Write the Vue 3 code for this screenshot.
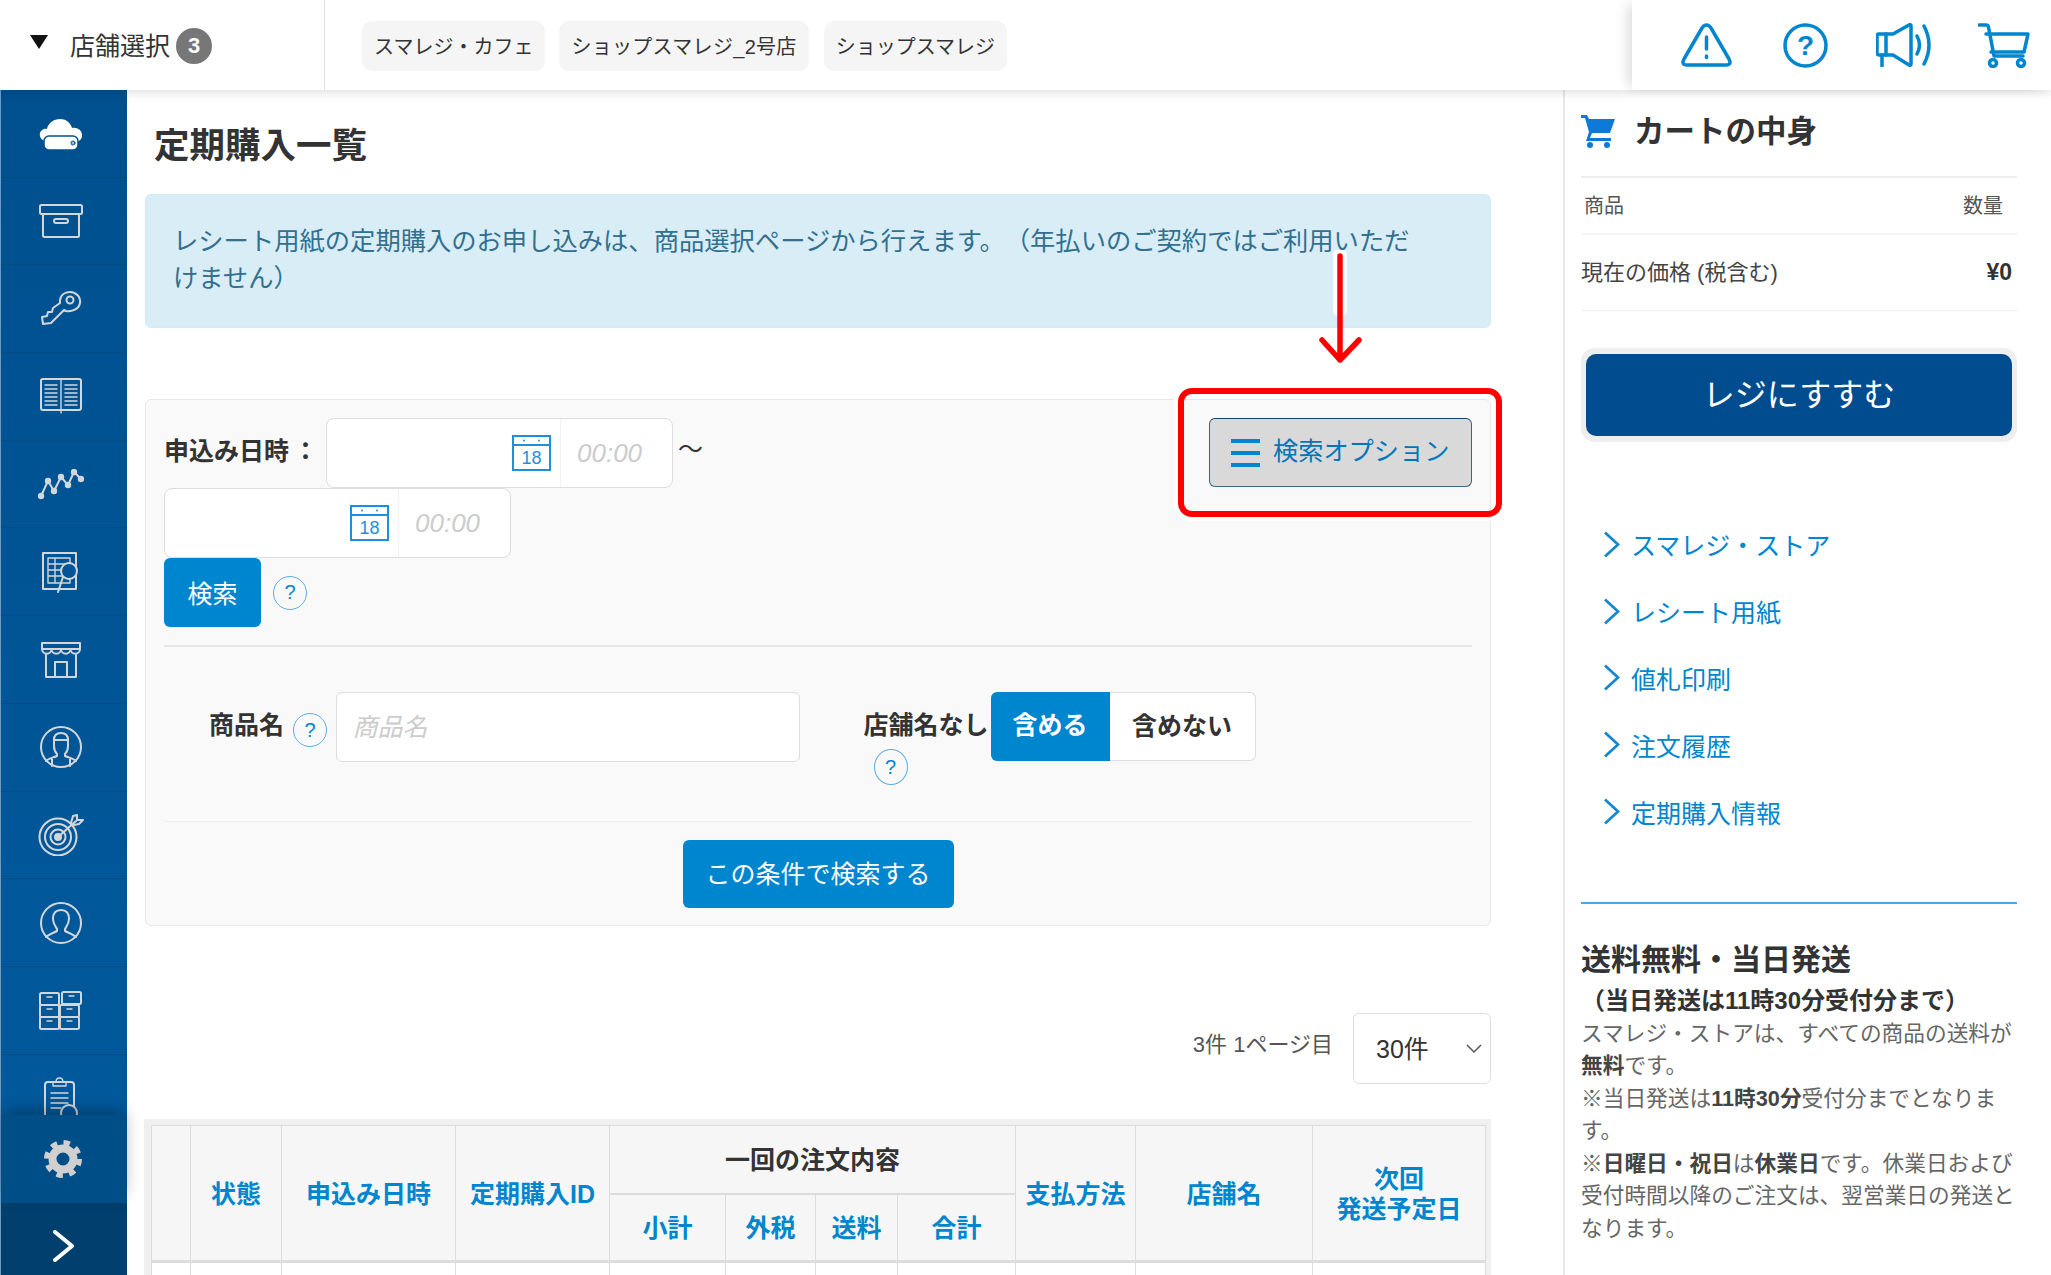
<script setup>
const tags = ['スマレジ・カフェ', 'ショップスマレジ_2号店', 'ショップスマレジ']
const links = ['スマレジ・ストア', 'レシート用紙', '値札印刷', '注文履歴', '定期購入情報']
</script>

<template>
  <div class="page">
    <header class="topbar">
      <div class="shop-select">
        <span class="caret"></span>
        <span>店舗選択</span>
        <span class="badge">3</span>
      </div>
      <div class="tags">
        <span v-for="tag in tags" :key="tag" class="tag">{{ tag }}</span>
      </div>
      <div class="top-icons">
        <svg width="51" height="44" viewBox="0 0 51 44" class="top-icon">
          <path d="M25.5 2Q28 2 30 5L48 36Q51 42 45 42H6Q0 42 3 36L21 5Q23 2 25.5 2Z" />
          <path d="M25.5 14V26M25.5 33V34.5" />
        </svg>
        <svg width="45" height="45" viewBox="0 0 45 45" class="top-icon">
          <circle cx="22.5" cy="22.5" r="20.5" />
          <text x="22.5" y="32" text-anchor="middle" class="help-mark">?</text>
        </svg>
        <svg width="57" height="44" viewBox="0 0 57 44" class="top-icon">
          <path d="M17 11L33 2Q35 1 35 3V41Q35 43 33 42L17 32H3Q1 32 1 30V13Q1 11 3 11Z" />
          <path d="M10 11V32M6 32V43M41 13Q46 22 41 31M48 3Q58 22 48 41" />
        </svg>
        <svg width="52" height="45" viewBox="0 0 52 45" class="top-icon">
          <path d="M1 2H8Q10 2 10.5 4L16 33H45M8 11H50L46 29H13" />
          <circle cx="15" cy="40" r="3.5" />
          <circle cx="43" cy="40" r="3.5" />
        </svg>
      </div>
    </header>

    <div class="body">
      <nav class="sidenav">
        <div class="nav-list">
          <a class="nav-item nav-cloud">
            <svg width="44" height="32" viewBox="0 0 44 32">
              <path class="solid" d="M8 22C2 22 0 17 1 14C2 11 5 9 8 10C9 4 15 0 21 0C28 0 32 5 33 9C38 8 43 11 43 16C43 20 41 22 38 22Z" />
              <rect x="5" y="17" width="34" height="14" rx="5" class="drive" />
              <circle cx="34" cy="24" r="2" class="drive-dot" />
            </svg>
          </a>
          <a class="nav-item">
            <svg width="44" height="34" viewBox="0 0 44 34">
              <rect x="1" y="1" width="42" height="9" rx="1.5" />
              <rect x="4" y="10" width="36" height="23" rx="1.5" />
              <rect x="15" y="15" width="14" height="4" rx="2" />
            </svg>
          </a>
          <a class="nav-item">
            <svg width="42" height="35" viewBox="0 0 42 35">
              <path d="M20 9C21 3 26 1 30 1C36 1 41 6 40 12C39 18 32 21 26 20L24 19L11 32L3 33L2 26L7 25L8 21L12 21L13 17L20 12Z" />
              <circle cx="30" cy="9" r="3.5" />
            </svg>
          </a>
          <a class="nav-item">
            <svg width="42" height="36" viewBox="0 0 42 36">
              <rect x="1" y="1" width="40" height="31" rx="2" />
              <path d="M21 1V35M5 7H17M5 11H17M5 15H17M5 19H17M5 23H17M5 27H17M25 7H37M25 11H37M25 15H37M25 19H37M25 23H37M25 27H37" class="thin" />
            </svg>
          </a>
          <a class="nav-item">
            <svg width="46" height="31" viewBox="0 0 46 31">
              <path d="M3 27L10 12L16 22L23 8L30 16L36 3L43 10" />
              <circle cx="3" cy="27" r="2.2" class="dot" />
              <circle cx="10" cy="12" r="2.2" class="dot" />
              <circle cx="16" cy="22" r="2.2" class="dot" />
              <circle cx="23" cy="8" r="2.2" class="dot" />
              <circle cx="30" cy="16" r="2.2" class="dot" />
              <circle cx="36" cy="3" r="2.2" class="dot" />
              <circle cx="43" cy="10" r="2.2" class="dot" />
            </svg>
          </a>
          <a class="nav-item nav-report">
            <svg width="37" height="41" viewBox="0 0 37 41">
              <rect x="1" y="1" width="33" height="36" />
              <path d="M6 6H28V31H6ZM6 12H28M6 18H28M6 24H28M13 6V31" class="thin" />
              <circle cx="27" cy="19" r="8" class="filled" />
              <path d="M21 25L16 40" />
            </svg>
          </a>
          <a class="nav-item">
            <svg width="40" height="37" viewBox="0 0 40 37">
              <path d="M1 2H39V8A4.6 4.6 0 0 1 29.5 8A4.7 4.7 0 0 1 20 8A4.7 4.7 0 0 1 10.5 8A4.7 4.7 0 0 1 1 8ZM1 8H39" />
              <path d="M5 14V36H35V14M14 36V21H26V36" />
            </svg>
          </a>
          <a class="nav-item">
            <svg width="42" height="42" viewBox="0 0 42 42">
              <circle cx="21" cy="21" r="20" />
              <path d="M14 14Q14 7 21 7Q28 7 28 14M14 14H28M14 14V20C14 25 17 28 17 28V30C12 32 8 33 6 35M28 14V20C28 25 25 28 25 28V30C30 32 34 33 36 35M12 33V40M30 33V40" />
            </svg>
          </a>
          <a class="nav-item">
            <svg width="46" height="42" viewBox="0 0 46 42">
              <circle cx="20" cy="23" r="18.5" />
              <circle cx="20" cy="23" r="13" />
              <circle cx="20" cy="23" r="7.5" />
              <circle cx="20" cy="23" r="3" class="dot" />
              <path d="M20 23L38 7M33 9L35 2L39 1L39 6L45 6L41 10L36 11" />
            </svg>
          </a>
          <a class="nav-item">
            <svg width="42" height="42" viewBox="0 0 42 42">
              <circle cx="21" cy="21" r="20" />
              <path d="M21 8C15 8 13 12 13 17C13 22 16 25 17 27V29C13 31 8 33 6 35M21 8C27 8 29 12 29 17C29 22 26 25 25 27V29C29 31 34 33 36 35" />
            </svg>
          </a>
          <a class="nav-item">
            <svg width="43" height="39" viewBox="0 0 43 39">
              <rect x="1" y="2" width="19" height="12" rx="1.5" />
              <rect x="23" y="1" width="19" height="12" rx="1.5" />
              <rect x="1" y="14" width="19" height="12" rx="1.5" />
              <rect x="21" y="14" width="19" height="12" rx="1.5" />
              <rect x="1" y="26" width="19" height="12" rx="1.5" />
              <rect x="21" y="26" width="19" height="12" rx="1.5" />
              <path d="M8 6H13M30 5H35M8 18H13M28 18H33M8 30H13M28 30H33" class="thin" />
            </svg>
          </a>
          <a class="nav-item">
            <svg width="34" height="46" viewBox="0 0 34 46">
              <rect x="1" y="5" width="29" height="40" rx="3" />
              <path d="M9 9V5H12Q12 1 15.5 1Q19 1 19 5H22V9ZM7 16H24M7 21H24M7 26H24M7 31H17" class="thin" />
              <circle cx="25" cy="36" r="8" class="filled" />
            </svg>
          </a>
        </div>
        <a class="nav-gear">
          <svg width="38" height="38" viewBox="0 0 38 38">
            <circle cx="19" cy="19" r="10.5" class="gear-ring" />
            <circle cx="19" cy="19" r="16" class="gear-teeth" />
          </svg>
        </a>
        <a class="nav-toggle">
          <svg width="22" height="32" viewBox="0 0 22 32">
            <path d="M3 2L20 16L3 30" />
          </svg>
        </a>
      </nav>

      <main class="main">
        <h1 class="page-title">定期購入一覧</h1>
        <div class="notice">レシート用紙の定期購入のお申し込みは、商品選択ページから行えます。（年払いのご契約ではご利用いただけません）</div>

        <section class="search">
          <div class="search-top">
            <div class="date-block">
              <div class="date-row">
                <label class="date-label">申込み日時<span class="colon">：</span></label>
                <div class="date-input">
                  <div class="date-field">
                    <svg width="39" height="36" viewBox="0 0 39 36" class="calendar">
                      <rect x="1" y="1" width="37" height="34" />
                      <path d="M1 10H38" />
                      <circle cx="12" cy="5.5" r="1" class="cal-dot" />
                      <circle cx="27" cy="5.5" r="1" class="cal-dot" />
                      <text x="19.5" y="29" text-anchor="middle" class="cal-num">18</text>
                    </svg>
                  </div>
                  <div class="date-time">00:00</div>
                </div>
                <span class="tilde">〜</span>
              </div>
              <div class="date-input">
                <div class="date-field">
                  <svg width="39" height="36" viewBox="0 0 39 36" class="calendar">
                    <rect x="1" y="1" width="37" height="34" />
                    <path d="M1 10H38" />
                    <circle cx="12" cy="5.5" r="1" class="cal-dot" />
                    <circle cx="27" cy="5.5" r="1" class="cal-dot" />
                    <text x="19.5" y="29" text-anchor="middle" class="cal-num">18</text>
                  </svg>
                </div>
                <div class="date-time">00:00</div>
              </div>
              <div class="date-actions">
                <button class="btn-small">検索</button>
                <span class="help">?</span>
              </div>
            </div>
            <button class="btn-option">
              <span class="burger"><i></i><i></i><i></i></span>
              <span class="btn-option-text">検索オプション</span>
            </button>
          </div>

          <div class="search-fields">
            <label class="field-label">商品名</label>
            <span class="help">?</span>
            <div class="text-input">商品名</div>
            <div class="noname">
              <div class="noname-label">
                <label class="field-label">店舗名なし</label>
                <span class="help">?</span>
              </div>
              <div class="toggle">
                <span class="toggle-on">含める</span>
                <span class="toggle-off">含めない</span>
              </div>
            </div>
          </div>

          <div class="search-submit">
            <button class="btn-submit">この条件で検索する</button>
          </div>
        </section>

        <div class="pager">
          <span class="pager-count">3件 1ページ目</span>
          <div class="pager-select">
            <span class="pager-value">30件</span>
            <svg width="16" height="10" viewBox="0 0 16 10"><path d="M1 1L8 8L15 1" /></svg>
          </div>
        </div>

        <div class="table-wrap">
          <table class="orders">
            <colgroup>
              <col style="width: 39px" />
              <col style="width: 91px" />
              <col style="width: 174px" />
              <col style="width: 154px" />
              <col style="width: 116px" />
              <col style="width: 90px" />
              <col style="width: 82px" />
              <col style="width: 118px" />
              <col style="width: 120px" />
              <col style="width: 177px" />
              <col style="width: 173px" />
            </colgroup>
            <thead>
              <tr>
                <th rowspan="2"></th>
                <th rowspan="2">状態</th>
                <th rowspan="2">申込み日時</th>
                <th rowspan="2">定期購入ID</th>
                <th colspan="4" class="group">一回の注文内容</th>
                <th rowspan="2">支払方法</th>
                <th rowspan="2">店舗名</th>
                <th rowspan="2">次回<br />発送予定日</th>
              </tr>
              <tr>
                <th>小計</th>
                <th>外税</th>
                <th>送料</th>
                <th>合計</th>
              </tr>
            </thead>
            <tbody>
              <tr>
                <td v-for="n in 11" :key="n"></td>
              </tr>
            </tbody>
          </table>
        </div>
      </main>

      <aside class="cart">
        <div class="cart-title">
          <svg width="34" height="34" viewBox="0 0 34 34">
            <path d="M0 1H6L8 5H34L29 19H11L9 24H30V27H5L8 18L4 4H0Z" />
            <circle cx="9" cy="31" r="3" />
            <circle cx="26" cy="31" r="3" />
          </svg>
          <h2>カートの中身</h2>
        </div>
        <div class="cart-head">
          <span>商品</span>
          <span>数量</span>
        </div>
        <div class="cart-price">
          <span>現在の価格 (税含む)</span>
          <b>¥0</b>
        </div>
        <div class="checkout-wrap">
          <button class="checkout">レジにすすむ</button>
        </div>
        <ul class="cart-links">
          <li v-for="link in links" :key="link">
            <svg width="17" height="27" viewBox="0 0 17 27"><path d="M2 1.5L15 13.5L2 25.5" /></svg>
            <a>{{ link }}</a>
          </li>
        </ul>
        <div class="shipping">
          <h3>送料無料・当日発送</h3>
          <h4>（当日発送は11時30分受付分まで）</h4>
          <p>スマレジ・ストアは、すべての商品の送料が<b>無料</b>です。<br />※当日発送は<b>11時30分</b>受付分までとなります。<br />※<b>日曜日・祝日</b>は<b>休業日</b>です。休業日および受付時間以降のご注文は、翌営業日の発送となります。</p>
        </div>
      </aside>
    </div>

    <!-- 注釈 -->
    <div class="callout-box"></div>
    <svg class="callout-arrow" width="50" height="118" viewBox="0 0 50 118">
      <path class="halo" d="M25 5V60" />
      <path class="arrow" d="M25 6V110M7 90L25 110L44 90" />
    </svg>
  </div>
</template>

<style>
html,
body {
  margin: 0;
  background: #fff;
}
</style>

<style scoped>
.page {
  position: relative;
  width: 2051px;
  height: 1275px;
  overflow: hidden;
  display: flex;
  flex-direction: column;
  font-family: "Liberation Sans", "Noto Sans CJK JP", sans-serif;
  text-spacing-trim: space-all;
  color: #333;
  background: #fff;
}

/* header */
.topbar {
  position: relative;
  z-index: 3;
  display: flex;
  align-items: stretch;
  height: 90px;
  flex: none;
  background: #fff;
  box-shadow: 0 2px 10px rgba(0, 0, 0, 0.14);
}
.shop-select {
  display: flex;
  align-items: center;
  width: 325px;
  box-sizing: border-box;
  padding: 0 0 2px 30px;
  border-right: 1px solid #e2e2e2;
  font-size: 25px;
}
.caret {
  width: 0;
  height: 0;
  margin-right: 22px;
  margin-top: -4px;
  border-left: 9px solid transparent;
  border-right: 9px solid transparent;
  border-top: 14px solid #111;
}
.badge {
  display: flex;
  align-items: center;
  justify-content: center;
  width: 36px;
  height: 36px;
  margin: 3px 0 0 6px;
  border-radius: 50%;
  background: #777;
  color: #fff;
  font-size: 22px;
  font-weight: 700;
}
.tags {
  display: flex;
  align-items: center;
  gap: 14px;
  flex: 1;
  padding-left: 37px;
}
.tag {
  display: flex;
  align-items: center;
  height: 50px;
  margin-top: 2px;
  padding: 0 12px 2px;
  box-sizing: border-box;
  border-radius: 10px;
  background: #f5f5f5;
  font-size: 20px;
}
.tag:nth-child(2) {
  margin-right: 1px;
  letter-spacing: 0.3px;
}
.top-icons {
  display: grid;
  grid-template-columns: repeat(4, 99px);
  align-items: center;
  justify-items: center;
  width: 419px;
  box-sizing: border-box;
  padding-left: 25px;
  background: #fff;
  box-shadow: -8px 0 12px -4px rgba(0, 0, 0, 0.14);
}
.top-icon {
  fill: none;
  stroke: #0085cf;
  stroke-width: 3.5;
  stroke-linecap: round;
  stroke-linejoin: round;
}
.help-mark {
  fill: #0085cf;
  stroke: none;
  font-size: 28px;
  font-weight: 700;
}

.body {
  flex: 1;
  display: flex;
  min-height: 0;
}

/* left nav */
.sidenav {
  display: flex;
  flex-direction: column;
  width: 127px;
  flex: none;
  background: linear-gradient(#00508e, #005a9e);
  border-left: 1px solid #6d9cc0;
  box-sizing: border-box;
}
.nav-list {
  flex: 1;
  min-height: 0;
  overflow: hidden;
}
.nav-item {
  display: flex;
  align-items: center;
  justify-content: center;
  height: 87.7px;
  box-sizing: border-box;
  padding-right: 7px;
  border-bottom: 1px solid #004b83;
}
.nav-cloud {
  padding-top: 3px;
}
.nav-report {
  padding-top: 2px;
}
.nav-item:last-child {
  align-items: flex-start;
  padding-top: 22px;
}
.nav-item svg {
  fill: none;
  stroke: #d3d7da;
  stroke-width: 2;
  stroke-linejoin: round;
  stroke-linecap: round;
}
.nav-item .thin {
  stroke-width: 1.4;
}
.nav-item .dot {
  fill: #d3d7da;
}
.nav-item .filled {
  fill: #00559a;
}
.nav-item .solid {
  fill: #fff;
  stroke: none;
}
.nav-item .drive {
  fill: #fff;
  stroke: #00528f;
  stroke-width: 1.5;
}
.nav-item .drive-dot {
  fill: #9fc0da;
  stroke: #00528f;
  stroke-width: 1;
}
.nav-gear {
  position: relative;
  display: flex;
  align-items: center;
  justify-content: center;
  height: 88px;
  flex: none;
  padding-right: 3px;
  background: #004e88;
  box-shadow: 0 -6px 16px -4px rgba(0, 0, 0, 0.4);
}
.gear-ring {
  fill: none;
  stroke: #d0d0d0;
  stroke-width: 8;
}
.gear-teeth {
  fill: none;
  stroke: #d0d0d0;
  stroke-width: 6;
  stroke-dasharray: 6.3 6.27;
}
.nav-toggle {
  display: flex;
  align-items: center;
  justify-content: center;
  height: 72px;
  flex: none;
  box-sizing: border-box;
  padding: 13px 3px 0 0;
  background: #003f6e;
}
.nav-toggle svg {
  fill: none;
  stroke: #fff;
  stroke-width: 4;
  stroke-linecap: round;
  stroke-linejoin: round;
}

/* main column */
.main {
  flex: 1;
  min-width: 0;
  box-sizing: border-box;
  padding: 38px 72px 0 18px;
}
.page-title {
  margin: 0 0 30px 9px;
  font-size: 35.5px;
  line-height: 36px;
  font-weight: 700;
  color: #333;
}
.notice {
  padding: 28px 70px 30px 27px;
  border: 1px solid #d3ebf5;
  border-radius: 6px;
  background: #d9edf7;
  color: #31708f;
  font-size: 25.3px;
  line-height: 37px;
}
.search {
  margin-top: 71px;
  padding: 18px 18px 17px;
  border: 1px solid #e8e8e8;
  border-radius: 6px;
  background: #f9f9f9;
}
.search-top {
  display: flex;
  justify-content: space-between;
  align-items: flex-start;
  padding-bottom: 18px;
  border-bottom: 2px solid #e8e8e8;
}
.date-row {
  display: flex;
  align-items: flex-start;
}
.date-label {
  width: 162px;
  line-height: 66px;
  font-size: 25px;
  font-weight: 700;
}
.colon {
  margin-left: 4px;
}
.date-input {
  display: flex;
  width: 347px;
  height: 70px;
  box-sizing: border-box;
  border: 1px solid #ddd;
  border-radius: 8px;
  background: #fff;
}
.date-field {
  flex: 1;
  display: flex;
  align-items: center;
  justify-content: flex-end;
  padding-right: 9px;
  border-right: 1px solid #f2f2f2;
}
.calendar {
  fill: none;
  stroke: #1e8fdc;
  stroke-width: 2;
}
.cal-dot {
  fill: #1e8fdc;
  stroke: none;
}
.cal-num {
  fill: #1e8fdc;
  stroke: none;
  font-size: 18px;
}
.date-time {
  display: flex;
  align-items: center;
  width: 111px;
  box-sizing: border-box;
  padding-left: 16px;
  font-size: 26px;
  font-style: italic;
  color: #ccc;
}
.tilde {
  margin-left: 5px;
  font-size: 25px;
  line-height: 62px;
}
.date-actions {
  display: flex;
  align-items: center;
  gap: 12px;
}
.btn-small {
  width: 97px;
  height: 69px;
  padding: 0 0 2px;
  border: none;
  border-radius: 6px;
  background: #0085cf;
  color: #fff;
  font: inherit;
  font-size: 25px;
}
.help {
  display: flex;
  align-items: center;
  justify-content: center;
  width: 34px;
  height: 34px;
  flex: none;
  box-sizing: border-box;
  border: 1.5px solid #5aaee0;
  border-radius: 50%;
  color: #0085cf;
  font-size: 20px;
}
.btn-option {
  display: flex;
  align-items: center;
  gap: 13px;
  width: 263px;
  height: 69px;
  box-sizing: border-box;
  padding: 0 0 0 21px;
  border: 1px solid #3a6488;
  border-top-color: #12406a;
  border-radius: 6px;
  background: #d9d9d9;
  color: #0076bd;
  font: inherit;
  font-size: 25.2px;
  white-space: nowrap;
}
.btn-option-text {
  margin-top: -7px;
}
.burger {
  display: flex;
  flex-direction: column;
  gap: 8px;
  width: 29px;
}
.burger i {
  display: block;
  height: 4px;
  background: #0085cf;
}
.search-fields {
  display: flex;
  align-items: flex-start;
  padding: 45px 0 0 45px;
}
.field-label {
  font-size: 25px;
  font-weight: 700;
  line-height: 66px;
  white-space: nowrap;
}
.search-fields > .help {
  margin: 21px 8.5px 0 9px;
}
.text-input {
  width: 464px;
  height: 70px;
  box-sizing: border-box;
  padding-left: 16px;
  border: 1px solid #ddd;
  border-radius: 6px;
  background: #fff;
  color: #ccc;
  font-size: 25px;
  font-style: italic;
  line-height: 68px;
}
.noname {
  display: flex;
  align-items: flex-start;
  margin-left: 64px;
}
.noname-label {
  width: 127px;
  height: 93px;
}
.noname-label .field-label {
  display: block;
  height: 57px;
}
.noname-label .help {
  margin-left: 10px;
  height: 36px;
}
.toggle {
  display: flex;
  height: 69px;
  line-height: 66px;
  font-size: 25px;
  font-weight: 700;
  text-align: center;
}
.toggle-on {
  width: 119px;
  border-radius: 6px 0 0 6px;
  background: #0085cf;
  color: #fff;
}
.toggle-off {
  width: 146px;
  box-sizing: border-box;
  border: 1px solid #ddd;
  border-left: none;
  border-radius: 0 6px 6px 0;
  background: #fff;
}
.search-submit {
  display: flex;
  justify-content: center;
  margin-top: 36px;
  padding-top: 18px;
  border-top: 1px solid #eee;
}
.btn-submit {
  width: 271px;
  height: 68px;
  padding: 0 0 4px;
  border: none;
  border-radius: 6px;
  background: #0085cf;
  color: #fff;
  font: inherit;
  font-size: 25px;
}
.pager {
  display: flex;
  justify-content: flex-end;
  align-items: flex-start;
  gap: 20px;
  margin-top: 87px;
}
.pager-count {
  margin-top: 16px;
  font-size: 22px;
  line-height: 32px;
  color: #555;
}
.pager-select {
  display: flex;
  align-items: center;
  justify-content: space-between;
  width: 138px;
  height: 71px;
  box-sizing: border-box;
  padding: 0 8px 0 22px;
  border: 1px solid #ddd;
  border-radius: 6px;
  font-size: 25px;
}
.pager-value {
  margin-top: -3px;
}
.pager-select svg {
  fill: none;
  stroke: #555;
  stroke-width: 1.5;
}
.table-wrap {
  margin-top: 35px;
  margin-left: -1px;
  padding: 6px 6px 0 7px;
  background: #f0f0f0;
}
.orders {
  width: 1334px;
  table-layout: fixed;
  border-collapse: collapse;
  background: #fff;
}
.orders th {
  height: 68px;
  padding: 1px 0 0;
  box-sizing: border-box;
  border: 1px solid #ddd;
  background: #f6f6f6;
  color: #0085cf;
  font-size: 25px;
  line-height: 30px;
  font-weight: 700;
}
.orders th.group {
  color: #333;
  border-bottom: 2px solid #ddd;
}
.orders thead tr:last-child th,
.orders th[rowspan] {
  border-bottom: 3px solid #ddd;
}
.orders td {
  height: 60px;
  border: 1px solid #ddd;
}

/* right cart */
.cart {
  width: 488px;
  flex: none;
  box-sizing: border-box;
  padding: 24px 34px 0 16px;
  border-left: 2px solid #e8e8e8;
}
.cart-title {
  display: flex;
  align-items: center;
  gap: 19px;
  padding-bottom: 28px;
  border-bottom: 2px solid #eee;
}
.cart-title svg {
  fill: #0d7ad9;
}
.cart-title h2 {
  margin: 0;
  font-size: 30.5px;
  line-height: 34px;
  font-weight: 700;
}
.cart-head {
  display: flex;
  justify-content: space-between;
  align-items: center;
  height: 57px;
  box-sizing: border-box;
  padding: 0 14px 3px 3px;
  border-bottom: 2px solid #f4f4f4;
  font-size: 20px;
  color: #555;
}
.cart-price {
  display: flex;
  justify-content: space-between;
  align-items: center;
  height: 76px;
  padding: 0 5px 5px 0;
  box-sizing: border-box;
  border-bottom: 1px solid #eee;
  font-size: 22px;
  color: #444;
}
.cart-price b {
  margin-top: 4px;
  font-size: 23px;
  color: #333;
}
.checkout-wrap {
  margin-top: 37px;
  padding: 6px 5px;
  border-radius: 14px;
  background: #eee;
}
.checkout {
  display: block;
  width: 100%;
  height: 82px;
  padding: 0 0 6px;
  border: none;
  border-radius: 10px;
  background: #004c8f;
  color: #fff;
  font: inherit;
  font-size: 32px;
}
.cart-links {
  margin: 69px 0 0;
  padding: 0 0 0 22px;
  list-style: none;
}
.cart-links li {
  display: flex;
  align-items: center;
  gap: 11px;
  height: 66.8px;
  color: #0085cf;
  font-size: 25px;
}
.cart-links svg {
  fill: none;
  stroke: #1588d0;
  stroke-width: 2.8;
}
.shipping {
  margin-top: 57px;
  padding-top: 36px;
  border-top: 2px solid #4aa8e0;
}
.shipping h3 {
  margin: 0;
  font-size: 30px;
  line-height: 40px;
  font-weight: 700;
}
.shipping h4 {
  margin: 5px 0 0;
  font-size: 24px;
  line-height: 32px;
  font-weight: 700;
}
.shipping p {
  margin: 1px 0 0;
  font-size: 21.7px;
  line-height: 32.5px;
  color: #666;
}
.shipping p b {
  color: #444;
}

/* annotation laid over the screen */
.callout-box {
  position: absolute;
  left: 1178px;
  top: 388px;
  width: 324px;
  height: 129px;
  box-sizing: border-box;
  border: 6px solid #f00;
  border-radius: 14px;
  box-shadow: 0 0 0 4px #fff;
}
.callout-arrow {
  position: absolute;
  left: 1315px;
  top: 250px;
  fill: none;
  stroke-linecap: round;
  stroke-linejoin: round;
}
.callout-arrow .halo {
  stroke: #fff;
  stroke-width: 14;
}
.callout-arrow .arrow {
  stroke: #f00;
  stroke-width: 5.5;
}
</style>
